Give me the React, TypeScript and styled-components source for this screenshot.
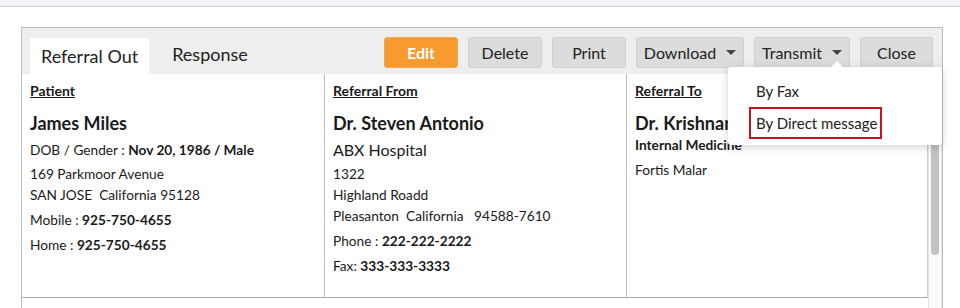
import styled, { createGlobalStyle } from "styled-components";

const GlobalStyle = createGlobalStyle`
  body {
    margin: 0;
    background: #ffffff;
    font-family: Lato, "Open Sans", "Liberation Sans", sans-serif;
    color: #1a1a1a;
  }
`;

const TopStrip = styled.div`
  height: 6px;
  background: #f5f5f9;
  border-bottom: 1px solid #d2d2d2;
`;

const Page = styled.div`
  padding: 20px 0 0 21px;
  height: 281px;
  overflow: hidden;
`;

const Panel = styled.div`
  width: 920px;
  border: 1px solid #bdbdbd;
  border-bottom: none;
  background: #eeeeee;
`;

const Header = styled.div`
  height: 46px;
  display: flex;
  align-items: flex-end;
  justify-content: space-between;
  padding: 0 9px 0 8px;
`;

const Tabs = styled.div`
  display: flex;
  align-items: flex-end;
  gap: 12px;
`;

const Tab = styled.div<{ $active?: boolean }>`
  height: 36px;
  padding: 0 11px ${(p) => (p.$active ? 0 : 4)}px;
  display: flex;
  align-items: center;
  box-sizing: border-box;
  font-size: 18px;
  color: #222;
  background: ${(p) => (p.$active ? "#ffffff" : "transparent")};
`;

const Toolbar = styled.div`
  display: flex;
  gap: 10px;
  align-self: flex-start;
  margin-top: 9px;
`;

const BtnWrap = styled.div`
  position: relative;
`;

const Button = styled.div<{ $primary?: boolean; $w: number }>`
  width: ${(p) => p.$w}px;
  height: 31px;
  box-sizing: border-box;
  display: flex;
  align-items: center;
  justify-content: center;
  gap: 10px;
  border-radius: 3px;
  font-size: 16px;
  border: 1px solid ${(p) => (p.$primary ? "#f5a54a" : "#cfcfcf")};
  background: ${(p) => (p.$primary ? "#f89a2e" : "#dcdcdc")};
  color: ${(p) => (p.$primary ? "#ffffff" : "#222")};
  font-weight: ${(p) => (p.$primary ? 700 : 400)};
`;

const Caret = styled.span`
  width: 0;
  height: 0;
  border-left: 5px solid transparent;
  border-right: 5px solid transparent;
  border-top: 5px solid #444;
`;

const Menu = styled.div`
  position: absolute;
  top: 30px;
  left: -26px;
  width: 214px;
  background: #ffffff;
  border-radius: 3px;
  box-shadow: 0 2px 10px rgba(0, 0, 0, 0.18);
  padding: 8px 0 6px 21px;
  box-sizing: border-box;
  z-index: 5;

  &::before {
    content: "";
    position: absolute;
    top: -6px;
    left: 103px;
    border-left: 6px solid transparent;
    border-right: 6px solid transparent;
    border-bottom: 6px solid #ffffff;
  }
`;

const MenuList = styled.div`
  display: flex;
  flex-direction: column;
  align-items: flex-start;
`;

const MenuItem = styled.div<{ $selected?: boolean }>`
  font-size: 15px;
  color: #222;
  line-height: 28px;
  padding: 0 3px 0 5px;
  border: 2px solid ${(p) => (p.$selected ? "#cc1122" : "transparent")};
`;

const Body = styled.div`
  display: flex;
  height: 234px;
  background: #ffffff;
`;

const Content = styled.div`
  flex: 1;
`;

const Columns = styled.div`
  display: grid;
  grid-template-columns: 302px 302px 301px;
  height: 223px;
  border-bottom: 1px solid #aaaaaa;
  border-right: 1px solid #cfcfcf;
`;

const Column = styled.div`
  padding: 8px 8px 0 8px;
  border-left: 1px solid #bdbdbd;
  &:first-child {
    border-left: none;
  }
`;

const Heading = styled.div`
  font-size: 14px;
  font-weight: 700;
  text-decoration: underline;
  line-height: 18px;
  margin-bottom: 12px;
`;

const Name = styled.div`
  font-size: 18px;
  font-weight: 700;
  line-height: 22px;
  white-space: nowrap;
`;

const Line = styled.div<{ $gap?: number; $size?: number; $bold?: boolean }>`
  font-size: ${(p) => p.$size ?? 13.7}px;
  font-weight: ${(p) => (p.$bold ? 700 : 400)};
  line-height: 21px;
  margin-top: ${(p) => p.$gap ?? 0}px;
  white-space: pre;
  b {
    font-weight: 700;
  }
`;

const Track = styled.div`
  width: 14px;
  box-sizing: border-box;
  border-left: 1px solid #e6e6e6;
  border-right: 1px solid #e6e6e6;
  background: #fafafa;
  padding: 2px 2px 0 2px;
`;

const Thumb = styled.div`
  height: 179px;
  border-radius: 4px;
  background: #c2c2c2;
`;

export default function App() {
  return (
    <>
      <GlobalStyle />
      <TopStrip />
      <Page>
        <Panel>
          <Header>
            <Tabs>
              <Tab $active>Referral Out</Tab>
              <Tab>Response</Tab>
            </Tabs>
            <Toolbar>
              <Button $primary $w={74}>Edit</Button>
              <Button $w={74}>Delete</Button>
              <Button $w={74}>Print</Button>
              <Button $w={108}>
                Download <Caret />
              </Button>
              <BtnWrap>
                <Button $w={96}>
                  Transmit <Caret />
                </Button>
                <Menu>
                  <MenuList>
                    <MenuItem>By Fax</MenuItem>
                    <MenuItem $selected>By Direct message</MenuItem>
                  </MenuList>
                </Menu>
              </BtnWrap>
              <Button $w={73}>Close</Button>
            </Toolbar>
          </Header>
          <Body>
            <Content>
              <Columns>
                <Column>
                  <Heading>Patient</Heading>
                  <Name>James Miles</Name>
                  <Line $gap={5}>
                    DOB / Gender : <b>Nov 20, 1986 / Male</b>
                  </Line>
                  <Line $gap={3}>169 Parkmoor Avenue</Line>
                  <Line>SAN JOSE  California 95128</Line>
                  <Line $gap={4}>
                    Mobile : <b>925-750-4655</b>
                  </Line>
                  <Line $gap={4}>
                    Home : <b>925-750-4655</b>
                  </Line>
                </Column>
                <Column>
                  <Heading>Referral From</Heading>
                  <Name>Dr. Steven Antonio</Name>
                  <Line $gap={5} $size={16}>ABX Hospital</Line>
                  <Line $gap={3}>1322</Line>
                  <Line>Highland Roadd</Line>
                  <Line>Pleasanton  California   94588-7610</Line>
                  <Line $gap={4}>
                    Phone : <b>222-222-2222</b>
                  </Line>
                  <Line $gap={4}>
                    Fax: <b>333-333-3333</b>
                  </Line>
                </Column>
                <Column>
                  <Heading>Referral To</Heading>
                  <Name>Dr. Krishnan</Name>
                  <Line $bold>Internal Medicine</Line>
                  <Line $gap={4}>Fortis Malar</Line>
                </Column>
              </Columns>
            </Content>
            <Track>
              <Thumb />
            </Track>
          </Body>
        </Panel>
      </Page>
    </>
  );
}
